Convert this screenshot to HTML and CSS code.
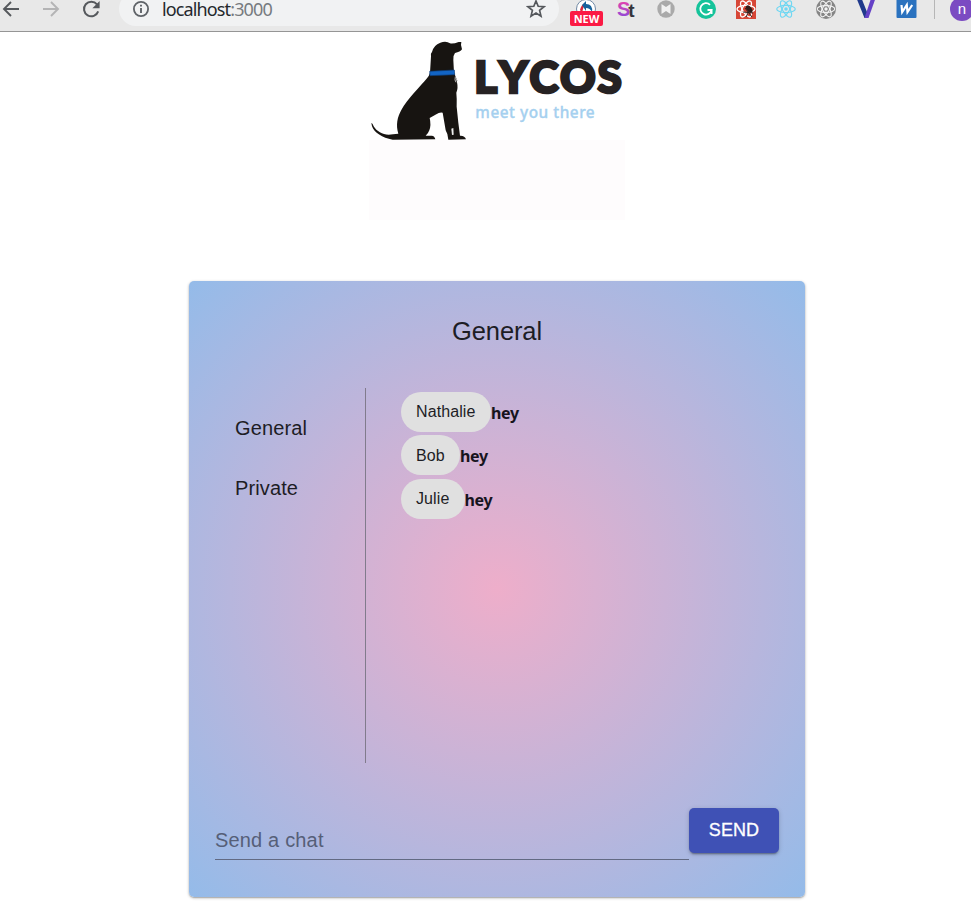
FILE: index.html
```html
<!DOCTYPE html>
<html lang="en">
<head>
<meta charset="utf-8">
<title>Lycos chat</title>
<link rel="stylesheet" href="styles.css">
</head>
<body>
<header class="toolbar">
  <div class="toolbar-row">
    <div class="nav">
      <svg class="cell" viewBox="-20 -12 40 24"><path d="M8 0H-7M0-7L-7 0L0 7" fill="none" stroke="#55585c" stroke-width="1.9"/></svg>
      <svg class="cell" viewBox="-20 -12 40 24"><path d="M-8 0H7M0-7L7 0L0 7" fill="none" stroke="#b4b4b5" stroke-width="1.9"/></svg>
      <svg class="cell" viewBox="-20 -12 40 24"><path d="M6-4.6A7.3 7.3 0 1 0 7.2 2.4" fill="none" stroke="#55585c" stroke-width="2"/><path d="M8.6-8V-.8H1.4Z" fill="#55585c"/></svg>
    </div>
    <div class="address">
      <svg class="info" viewBox="0 0 18 18"><circle cx="9" cy="9" r="7.1" fill="none" stroke="#5f6368" stroke-width="1.8"/><path d="M9 8V13M9 4.7V6.6" stroke="#5f6368" stroke-width="1.9"/></svg>
      <span class="url">localhost<span class="port">:3000</span></span>
      <svg class="star" viewBox="-10 -10 20 20"><path d="M0-8L2.2-2.7L8-2.3L3.6 1.4L5 7.1L0 4L-5 7.1L-3.6 1.4L-8-2.3L-2.2-2.7Z" fill="none" stroke="#55585c" stroke-width="1.7"/></svg>
    </div>
    <div class="extensions">
      <div class="cell badge-cell">
        <svg class="cell" viewBox="-20 -12 40 24"><circle r="9.5" fill="#fff" stroke="#7189a4" stroke-width="1"/><path d="M-6 1Q-5-4-1-6L-3 0L-4 4Z" fill="#d52a3c"/><path d="M-4-4L0-8V-5Q7-5 6 3Q4-1 0-1V2Z" fill="#16619b"/></svg>
        <span class="new-badge">NEW</span>
      </div>
      <svg class="cell" viewBox="-20 -12 40 24">
        <defs><linearGradient id="stGradient" x1="0" y1="0" x2="0" y2="1"><stop offset="0" stop-color="#f43fa5"/><stop offset="1" stop-color="#7b4ce1"/></linearGradient></defs>
        <text class="st" x="-9" y="7"><tspan fill="url(#stGradient)">S</tspan><tspan class="st-t" dx="-2" dy="1">t</tspan></text>
      </svg>
      <svg class="cell" viewBox="-20 -12 40 24"><circle r="8.7" fill="#aaa"/><path d="M-4.5-5L0-2L4.5-5V5L0 2L-4.5 5Z" fill="#f1f1f1"/></svg>
      <svg class="cell" viewBox="-20 -12 40 24"><circle r="10" fill="#15c39a"/><path d="M4-4.2A5.7 5.7 0 1 0 5.6 1H1.5M5.6 1V5" fill="none" stroke="#fff" stroke-width="1.8"/></svg>
      <svg class="cell" viewBox="-20 -12 40 24"><rect x="-10" y="-10" width="20" height="20" fill="#d74636"/><g fill="none" stroke="#fff" stroke-width="1.3"><ellipse rx="9" ry="3.6"/><ellipse rx="9" ry="3.6" transform="rotate(60)"/><ellipse rx="9" ry="3.6" transform="rotate(120)"/></g><ellipse cx="2.5" cy="2" rx="2.4" ry="4.2" fill="#321d1a" transform="rotate(-40)"/><path d="M-3 3L7 4M0 8L5-2M-1-1L6 8" stroke="#321d1a" stroke-width="1"/></svg>
      <svg class="cell" viewBox="-20 -12 40 24"><g fill="none" stroke="#70d7f2" stroke-width="1.2"><ellipse rx="9.3" ry="3.6"/><ellipse rx="9.3" ry="3.6" transform="rotate(60)"/><ellipse rx="9.3" ry="3.6" transform="rotate(120)"/></g><circle r="1.8" fill="#70d7f2"/></svg>
      <svg class="cell" viewBox="-20 -12 40 24"><circle r="10" fill="#858585"/><g fill="none" stroke="#f4f4f4" stroke-width="1.1"><ellipse rx="8.8" ry="3.4"/><ellipse rx="8.8" ry="3.4" transform="rotate(60)"/><ellipse rx="8.8" ry="3.4" transform="rotate(120)"/></g><circle r="1.7" fill="#f4f4f4"/></svg>
      <svg class="cell" viewBox="-20 -12 40 24"><path d="M-10-12H-5L1 3L2 9H-1.5Z" fill="#203a8c"/><path d="M5.5-12H10L2.5 9H-1.5Z" fill="#6541c7"/></svg>
      <svg class="cell" viewBox="-20 -12 40 24"><rect x="-9.5" y="-11" width="20" height="20" rx="1" fill="#2a72bf"/><path d="M-4.5-4L-3.8 3L.8-4L1.5 3L6.2-4" fill="none" stroke="#fff" stroke-width="2.2"/></svg>
    </div>
    <span class="divider"></span>
    <span class="avatar">n</span>
  </div>
</header>
<main class="page">
  <svg class="logo" viewBox="27 6 768 564" role="img" aria-label="Lycos">
    <rect x="27" y="330" width="768" height="240" fill="#fefcfd"/>
    <path d="M34 279C38 280 39 284 41 289C50 304 67 314 86 314Q98 312 115 311C107 284 112 262 124 240C142 207 181 169 201 145Q208 136 210 128L213 79Q211 70 216 66Q221 45 241 38Q259 32 270 40Q280 42 296 36L304 36L303 45L306 58Q301 66 285 69Q279 76 280 90L282 128Q290 143 291 157Q295 175 289 188Q291 207 290 230L295 278L300 317Q314 316 318 328L265 329L262 312L257 301L248 248Q238 246 229 253L209 264Q214 285 208 301Q205 310 197 317L215 317Q224 318 226 328L98 329C67 324 42 307 36 289Z" fill="#171411"/>
    <path d="M274 296L280 294L281 314L276 315Z" fill="#eee"/>
    <path d="M286 140Q283 151 288 157M288 146L292 153" fill="none" stroke="#b9b9b9" stroke-width="3"/>
    <path d="M209 124L283 120L284 134L210 137Z" fill="#1264c4" stroke="#0b3974" stroke-width="2"/>
    <text class="wordmark" x="343" y="188" textLength="442" lengthAdjust="spacing">LYCOS</text>
    <text class="tagline" x="346" y="264" textLength="358" lengthAdjust="spacing">meet you there</text>
  </svg>
  <section class="card">
    <h1 class="title">General</h1>
    <div class="chat">
      <nav class="channels">
        <div class="channel">General</div>
        <div class="channel">Private</div>
      </nav>
      <div class="messages">
        <div class="message"><span class="chip nathalie">Nathalie</span><b>hey</b></div>
        <div class="message"><span class="chip bob">Bob</span><b>hey</b></div>
        <div class="message"><span class="chip julie">Julie</span><b>hey</b></div>
      </div>
    </div>
    <div class="composer">
      <div class="field">Send a chat</div>
      <button class="send">SEND</button>
    </div>
  </section>
</main>
</body>
</html>
```
FILE: styles.css
```css
* { box-sizing: border-box; }
html, body { margin: 0; }
body { height: 919px; overflow: hidden; background: #fff; font-family: "Liberation Sans", Arial, sans-serif; color: #1d1d25; }
.toolbar { height: 32px; overflow: hidden; background: #e8e8e8; border-bottom: 1px solid #959595; }
.toolbar-row { display: flex; align-items: center; height: 34px; margin-top: -8px; width: 980px; }
.nav { display: flex; width: 119px; margin-left: -9px; margin-right: 9px; flex: none; }
.cell { display: block; width: 40px; height: 24px; flex: none; }
.address { width: 440px; height: 34px; flex: none; display: flex; align-items: center; padding: 0 13px 0 13px; background: #f1f2f3; border-radius: 17px; }
.info { width: 18px; height: 18px; }
.url { margin-left: 12px; font: 18px/18px "Noto Sans", sans-serif; letter-spacing: -.87px; color: #25282c; }
.port { color: #777b80; }
.star { width: 20px; height: 20px; margin-left: auto; }
.extensions { display: flex; margin-left: 7px; flex: none; }
.badge-cell { position: relative; }
.new-badge { position: absolute; left: 4px; top: 14px; width: 33px; height: 15px; background: #fb1a44; border-radius: 2px; color: #fff; font: bold 11px/15px "Open Sans", sans-serif; text-align: center; }
.st { font: bold 20px "Liberation Sans", sans-serif; }
.st-t { font-size: 19px; fill: #35353b; }
.divider { width: 1px; height: 20px; margin-left: 8px; background: #b6b6b6; }
.avatar { width: 24px; height: 24px; margin-left: 15px; border-radius: 50%; background: #7b4bc2; color: #fff; text-align: center; font: 15px/23px "Liberation Sans", sans-serif; flex: none; }
.page { display: flex; flex-direction: column; align-items: flex-start; }
.logo { display: block; width: 256px; height: 188px; margin-left: 369px; }
.wordmark { font: 900 132px Lato, sans-serif; fill: #262223; stroke: #262223; stroke-width: 8px; font-kerning: none; }
.tagline { font: 500 46px "Noto Sans", sans-serif; fill: #a5d0ef; stroke: #a5d0ef; stroke-width: 1px; }
.card { display: flex; flex-direction: column; width: 616px; height: 615.5px; margin: 61px 0 0 189px; padding: 35px 26px 36.5px; border-radius: 5px; background: radial-gradient(circle, #eeaeca 0%, #94bbe9 100%); box-shadow: 0 1px 3px rgba(0,0,0,.3), 0 1px 1px rgba(0,0,0,.14); }
.title { margin: 0; font-size: 25.5px; font-weight: 400; line-height: 31px; letter-spacing: -.1px; text-align: center; }
.chat { display: flex; height: 375px; margin-top: 41px; }
.channels { width: 151px; padding: 10px 20px; border-right: 1px solid #817b8c; font-size: 20px; letter-spacing: .12px; }
.channel { height: 60px; line-height: 60px; }
.messages { padding: 4px 0 0 35px; }
.message { display: flex; align-items: center; height: 40px; margin-bottom: 3.4px; }
.message b { font: bold 16px/24px "Noto Sans", sans-serif; letter-spacing: -.3px; color: #17141d; padding-top: 2px; }
.chip { height: 40px; line-height: 40px; border-radius: 20px; background: #e0e0e0; padding-left: 15px; font-size: 16px; letter-spacing: .1px; }
.nathalie { width: 90px; }
.bob { width: 59px; line-height: 41px; }
.julie { width: 63.5px; }
.composer { display: flex; align-items: flex-end; margin-top: auto; }
.field { width: 474px; height: 40px; border-bottom: 1px solid #626a83; font-size: 20px; letter-spacing: .17px; line-height: 40px; color: #565f78; }
.send { width: 90px; height: 45px; margin-bottom: 7px; padding: 0 0 1px; border: 0; border-radius: 5px; background: #3f51b5; color: #fff; font: 18px "Liberation Sans", sans-serif; letter-spacing: .1px; -webkit-text-stroke: .3px #fff; box-shadow: 0 3px 1px -2px rgba(0,0,0,.2), 0 2px 2px rgba(0,0,0,.14), 0 1px 5px rgba(0,0,0,.16); }
```
